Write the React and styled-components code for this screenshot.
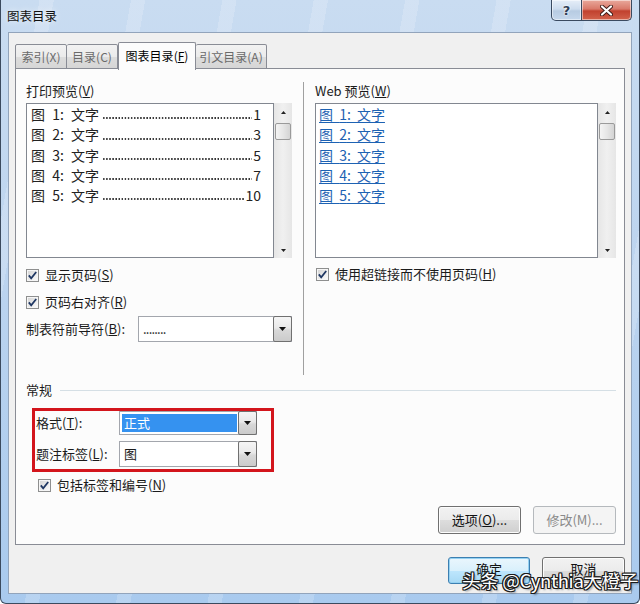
import styled, { createGlobalStyle } from "styled-components";

const GlobalStyle = createGlobalStyle`
  html, body {
    margin: 0;
    padding: 0;
    width: 640px;
    height: 604px;
    overflow: hidden;
    background: #fff;
  }
  body {
    font-family: "Noto Sans CJK SC", "Noto Sans", sans-serif;
    font-size: 13px;
    color: #1b1b1b;
  }
  * { box-sizing: border-box; }
`;

const rows = [
  { n: 1, page: 1 },
  { n: 2, page: 3 },
  { n: 3, page: 5 },
  { n: 4, page: 7 },
  { n: 5, page: 10 },
];

const Window = styled.div`
  position: relative;
  width: 640px;
  height: 604px;
  display: flex;
  flex-direction: column;
  background:
    repeating-linear-gradient(100deg, rgba(255,255,255,0) 0 38px, rgba(255,255,255,0.18) 38px 52px, rgba(255,255,255,0) 52px 90px),
    linear-gradient(180deg, #c9dcf1 0%, #bcd4ef 45%, #a9caee 100%);
  border-left: 1px solid #3b4a5e;
  border-right: 1px solid #3b4a5e;
  border-bottom: 1px solid #3b4a5e;
  border-radius: 0 0 6px 6px;
`;

const TitleBar = styled.div`
  height: 32px;
  flex: none;
  display: flex;
  align-items: flex-start;
  justify-content: space-between;
  padding-right: 7px;
`;

const Title = styled.div`
  padding: 7px 0 0 6px;
  font-size: 12.5px;
  line-height: 18px;
  color: #111;
  text-shadow: 0 0 6px rgba(255,255,255,0.9);
`;

const Caption = styled.div`
  display: flex;
`;

const CaptionButton = styled.div`
  width: ${(p) => p.$w}px;
  height: 21px;
  display: flex;
  align-items: center;
  justify-content: center;
  border: 1px solid #3a4a60;
  border-top: none;
  border-left: ${(p) => (p.$close ? "none" : "1px solid #3a4a60")};
  border-radius: ${(p) => (p.$close ? "0 0 5px 0" : "0 0 0 5px")};
  background: ${(p) =>
    p.$close
      ? "linear-gradient(180deg, #e9a99c 0%, #d9796a 45%, #c1412f 55%, #d2624c 100%)"
      : "linear-gradient(180deg, #e6eef8 0%, #cddcee 45%, #b7cbe2 55%, #c6d8ec 100%)"};
  box-shadow: inset 0 0 0 1px rgba(255,255,255,0.5);
`;

const HelpGlyph = styled.span`
  font-family: "DejaVu Sans", sans-serif;
  font-weight: bold;
  font-size: 13px;
  color: #2f3e55;
  text-shadow: 0 0 2px #fff, 0 0 2px #fff;
`;

const Client = styled.div`
  flex: 1;
  margin: 0 7px 9px 7px;
  display: flex;
  flex-direction: column;
  background: #f0f0f0;
  border: 1px solid #92a4bb;
  padding: 9px 6px 9px 6px;
`;

const TabStrip = styled.div`
  height: 27px;
  display: flex;
  align-items: flex-end;
  position: relative;
  z-index: 1;
`;

const Tab = styled.div`
  width: ${(p) => p.$w}px;
  height: ${(p) => (p.$active ? 28 : 25)}px;
  margin-bottom: ${(p) => (p.$active ? -1 : 0)}px;
  display: flex;
  align-items: center;
  justify-content: center;
  border: 1px solid #898c95;
  border-bottom: ${(p) => (p.$active ? "none" : "1px solid #898c95")};
  border-left: ${(p) => (p.$first || p.$active ? "1px solid #898c95" : "none")};
  border-radius: 2px 2px 0 0;
  background: ${(p) =>
    p.$active ? "#fcfcfc" : "linear-gradient(180deg, #f2f2f2 0%, #ebebeb 50%, #dddddd 51%, #d6d6d6 100%)"};
  color: ${(p) => (p.$active ? "#000" : "#6a6a6a")};
  font-size: 12px;
  line-height: 16px;
  white-space: nowrap;
  padding-bottom: ${(p) => (p.$active ? 2 : 0)}px;
`;

const Panel = styled.div`
  flex: 1;
  margin-top: -1px;
  background: #fcfcfc;
  border: 1px solid #898c95;
  padding: 13px 8px 0 10px;
  display: flex;
  flex-direction: column;
`;

const TopSection = styled.div`
  display: grid;
  grid-template-columns: 266px 1px 1fr;
  column-gap: 11px;
  min-height: 293px;
`;

const Column = styled.div`
  display: flex;
  flex-direction: column;
`;

const Separator = styled.div`
  background: #a0a0a0;
  width: 1px;
`;

const Label = styled.div`
  font-size: 13px;
  line-height: 18px;
  color: #1b1b1b;
  white-space: nowrap;
  width: ${(p) => (p.$w ? `${p.$w}px` : "auto")};
  flex: none;
`;

const PreviewBox = styled.div`
  margin-top: 3px;
  height: 155px;
  display: flex;
`;

const List = styled.div`
  flex: 1;
  background: #fff;
  border: 1px solid #828790;
  padding: 0 12px 0 ${(p) => p.$pl}px;
  display: flex;
  flex-direction: column;
`;

const PrintRow = styled.div`
  height: 20.3px;
  display: flex;
  align-items: center;
  font-size: 14px;
  line-height: 18px;
  color: #222;
  white-space: nowrap;
`;

const Caption1 = styled.span`
  word-spacing: 4px;
`;

const Leader = styled.span`
  flex: 1;
  align-self: flex-end;
  height: 2px;
  margin: 0 1px 5px 4px;
  background: radial-gradient(circle at 1px 1px, #333 0.75px, transparent 1.05px) left bottom / 3.1px 2px repeat-x;
`;

const LinkRow = styled.a`
  height: 20.3px;
  display: flex;
  align-items: center;
  font-size: 14px;
  line-height: 18px;
  color: #1d62b3;
  text-decoration: underline;
  text-underline-offset: 2px;
  word-spacing: 3px;
  white-space: nowrap;
  align-self: flex-start;
`;

const ScrollBar = styled.div`
  width: 18px;
  flex: none;
  display: flex;
  flex-direction: column;
  align-items: center;
  background: linear-gradient(90deg, #e6e6e6 0%, #f0f0f0 50%, #e6e6e6 100%);
`;

const ArrowCell = styled.div`
  height: ${(p) => p.$h}px;
  display: flex;
  align-items: ${(p) => (p.$down ? "flex-end" : "center")};
  padding-bottom: ${(p) => (p.$down ? 6 : 0)}px;
  justify-content: center;
`;

const Thumb = styled.div`
  width: 16px;
  height: 17px;
  margin-top: 2px;
  border: 1px solid #9a9a9a;
  border-radius: 2px;
  background: linear-gradient(90deg, #f4f4f4 0%, #e6e6e6 50%, #d4d4d4 100%);
`;

const Spacer = styled.div`
  flex: 1;
`;

const CheckRow = styled.div`
  height: 20px;
  display: flex;
  align-items: center;
  gap: 6px;
  margin-top: ${(p) => p.$mt || 0}px;
  margin-left: ${(p) => p.$ml || 0}px;
`;

const FieldRow = styled.div`
  display: flex;
  align-items: center;
  margin-top: ${(p) => p.$mt || 0}px;
`;

const Combo = styled.div`
  width: ${(p) => p.$w}px;
  height: ${(p) => p.$h}px;
  display: flex;
  background: #fff;
  border: 1px solid #a3a6ad;
  padding: 1px;
`;

const ComboText = styled.div`
  flex: 1;
  display: flex;
  align-items: center;
  padding-left: 3px;
  font-size: 13px;
  line-height: 16px;
  letter-spacing: ${(p) => p.$ls || 0}px;
`;

const Highlight = styled.div`
  flex: 1;
  margin: 1px;
  display: flex;
  align-items: center;
  padding-left: 2px;
  background: #3592f0;
  color: #fff;
  font-size: 13px;
  line-height: 16px;
`;

const DropButton = styled.div`
  width: 19px;
  flex: none;
  margin: -2px -2px -2px 0;
  display: flex;
  align-items: center;
  justify-content: center;
  border: 1px solid #707070;
  border-radius: 2px;
  background: linear-gradient(180deg, #f5f5f5 0%, #e9e9e9 45%, #d8d8d8 55%, #cbcbcb 100%);
`;

const GroupHeader = styled.div`
  display: flex;
  align-items: center;
  margin-top: 7px;
  height: 16px;
`;

const GroupLine = styled.div`
  flex: 1;
  height: 1px;
  margin-left: 8px;
  background: #d5dfe5;
`;

const RedBox = styled.div`
  width: 242px;
  margin: 10px 0 0 6px;
  border: 3px solid #d3151c;
  padding: 0 0 2px 1px;
  display: flex;
  flex-direction: column;
  gap: 6px;
`;

const ButtonRow = styled.div`
  display: flex;
  justify-content: flex-end;
  gap: 12px;
  margin-top: ${(p) => p.$mt}px;
`;

const WinButton = styled.div`
  width: ${(p) => p.$w}px;
  height: ${(p) => p.$h}px;
  display: flex;
  align-items: ${(p) => (p.$top ? "flex-start" : "center")};
  padding-top: ${(p) => (p.$top ? 3 : 0)}px;
  justify-content: center;
  border-radius: 3px;
  font-size: 13px;
  line-height: 16px;
  border: 1px solid ${(p) => (p.$disabled ? "#b5b9bd" : p.$primary ? "#3c7fb1" : "#707070")};
  color: ${(p) => (p.$disabled ? "#8a8a8a" : "#111")};
  background: ${(p) =>
    p.$disabled
      ? "#f4f4f4"
      : p.$primary
      ? "linear-gradient(180deg, #eaf6fd 0%, #d9f0fc 50%, #bee6fd 51%, #a7d9f5 100%)"
      : "linear-gradient(180deg, #f2f2f2 0%, #ebebeb 50%, #dddddd 51%, #cfcfcf 100%)"};
  box-shadow: ${(p) =>
    p.$disabled ? "none" : p.$primary ? "inset 0 0 0 1px #94d1f2" : "inset 0 0 0 1px #fcfcfc"};
`;

const Footer = styled.div`
  display: flex;
  justify-content: flex-end;
  gap: 12px;
  margin-top: 12px;
`;

const Watermark = styled.div`
  position: absolute;
  left: 461px;
  top: 569px;
  font-size: 18.5px;
  line-height: 22px;
  color: #fff;
  white-space: nowrap;
  letter-spacing: -0.3px;
  text-shadow: 1px 0 #1a1a1a, -1px 0 #1a1a1a, 0 1px #1a1a1a, 0 -1px #1a1a1a,
    1px 1px #1a1a1a, -1px -1px #1a1a1a, 1px -1px #1a1a1a, -1px 1px #1a1a1a,
    2px 2px 2px rgba(0,0,0,0.4);
`;

const Tri = ({ up }) => (
  <svg width="7" height="4" viewBox="0 0 7 4">
    <path d={up ? "M0 4 L3.5 0 L7 4 Z" : "M0 0 L7 0 L3.5 4 Z"} fill="#111" />
  </svg>
);

const SmallTri = ({ up }) => (
  <svg width="5" height="3" viewBox="0 0 5 3">
    <path d={up ? "M0 3 L2.5 0 L5 3 Z" : "M0 0 L5 0 L2.5 3 Z"} fill="#222" />
  </svg>
);

const CheckBox = () => (
  <svg width="13" height="13" viewBox="0 0 13 13">
    <defs>
      <linearGradient id="cbfill" x1="0" y1="0" x2="1" y2="1">
        <stop offset="0" stopColor="#d6d6d6" />
        <stop offset="1" stopColor="#fafafa" />
      </linearGradient>
    </defs>
    <rect x="0.5" y="0.5" width="12" height="12" fill="#f6f6f6" stroke="#8e8f8f" />
    <rect x="2" y="2" width="9" height="9" fill="url(#cbfill)" />
    <path d="M2.8 6.4 L5.2 9.3 L10.2 3" fill="none" stroke="#1f3763" strokeWidth="1.8" />
  </svg>
);

const CloseGlyph = () => (
  <svg width="13" height="11" viewBox="0 0 13 11">
    <path d="M2 1.5 L11 9.5 M11 1.5 L2 9.5" stroke="#3a1a16" strokeWidth="4" strokeLinecap="round" />
    <path d="M2 1.5 L11 9.5 M11 1.5 L2 9.5" stroke="#fff" strokeWidth="2.2" strokeLinecap="round" />
  </svg>
);

const Scroll = () => (
  <ScrollBar>
    <ArrowCell $h={18}>
      <SmallTri up />
    </ArrowCell>
    <Thumb />
    <Spacer />
    <ArrowCell $h={18} $down>
      <SmallTri />
    </ArrowCell>
  </ScrollBar>
);

const Mn = ({ k }) => (
  <>
    (<u>{k}</u>)
  </>
);

export default function App() {
  return (
    <>
      <GlobalStyle />
      <Window>
        <TitleBar>
          <Title>图表目录</Title>
          <Caption>
            <CaptionButton $w={31}>
              <HelpGlyph>?</HelpGlyph>
            </CaptionButton>
            <CaptionButton $w={50} $close>
              <CloseGlyph />
            </CaptionButton>
          </Caption>
        </TitleBar>

        <Client>
          <TabStrip>
            <Tab $w={52} $first>索引(X)</Tab>
            <Tab $w={51}>目录(C)</Tab>
            <Tab $w={78} $active>
              图表目录<Mn k="F" />
            </Tab>
            <Tab $w={71}>引文目录(A)</Tab>
          </TabStrip>

          <Panel>
            <TopSection>
              <Column>
                <Label>
                  打印预览<Mn k="V" />
                </Label>
                <PreviewBox>
                  <List $pl={4}>
                    {rows.map((r) => (
                      <PrintRow key={r.n}>
                        <Caption1>图 {r.n}: 文字</Caption1>
                        <Leader />
                        <span>{r.page}</span>
                      </PrintRow>
                    ))}
                  </List>
                  <Scroll />
                </PreviewBox>
                <CheckRow $mt={7}>
                  <CheckBox />
                  <Label>
                    显示页码<Mn k="S" />
                  </Label>
                </CheckRow>
                <CheckRow $mt={7}>
                  <CheckBox />
                  <Label>
                    页码右对齐<Mn k="R" />
                  </Label>
                </CheckRow>
                <FieldRow $mt={4}>
                  <Label $w={112}>
                    制表符前导符<Mn k="B" />:
                  </Label>
                  <Combo $w={154} $h={26}>
                    <ComboText $ls={-0.8}>........</ComboText>
                    <DropButton>
                      <Tri />
                    </DropButton>
                  </Combo>
                </FieldRow>
              </Column>

              <Separator />

              <Column>
                <Label>
                  Web 预览<Mn k="W" />
                </Label>
                <PreviewBox>
                  <List $pl={3}>
                    {rows.map((r) => (
                      <LinkRow key={r.n}>图 {r.n}: 文字</LinkRow>
                    ))}
                  </List>
                  <Scroll />
                </PreviewBox>
                <CheckRow $mt={6} $ml={1}>
                  <CheckBox />
                  <Label>
                    使用超链接而不使用页码<Mn k="H" />
                  </Label>
                </CheckRow>
              </Column>
            </TopSection>

            <GroupHeader>
              <Label>常规</Label>
              <GroupLine />
            </GroupHeader>

            <RedBox>
              <FieldRow>
                <Label $w={83}>
                  格式<Mn k="T" />:
                </Label>
                <Combo $w={138} $h={24}>
                  <Highlight>正式</Highlight>
                  <DropButton>
                    <Tri />
                  </DropButton>
                </Combo>
              </FieldRow>
              <FieldRow>
                <Label $w={83}>
                  题注标签<Mn k="L" />:
                </Label>
                <Combo $w={138} $h={26}>
                  <ComboText>图</ComboText>
                  <DropButton>
                    <Tri />
                  </DropButton>
                </Combo>
              </FieldRow>
            </RedBox>

            <CheckRow $mt={3} $ml={12}>
              <CheckBox />
              <Label>
                包括标签和编号<Mn k="N" />
              </Label>
            </CheckRow>

            <ButtonRow $mt={11}>
              <WinButton $w={83} $h={28}>
                选项<Mn k="O" />...
              </WinButton>
              <WinButton $w={83} $h={28} $disabled>
                修改(M)...
              </WinButton>
            </ButtonRow>
          </Panel>

          <Footer>
            <WinButton $w={82} $h={27} $primary $top>
              确定
            </WinButton>
            <WinButton $w={83} $h={27} $top>
              取消
            </WinButton>
          </Footer>
        </Client>

        <Watermark>头条 @Cynthia大橙子</Watermark>
      </Window>
    </>
  );
}
